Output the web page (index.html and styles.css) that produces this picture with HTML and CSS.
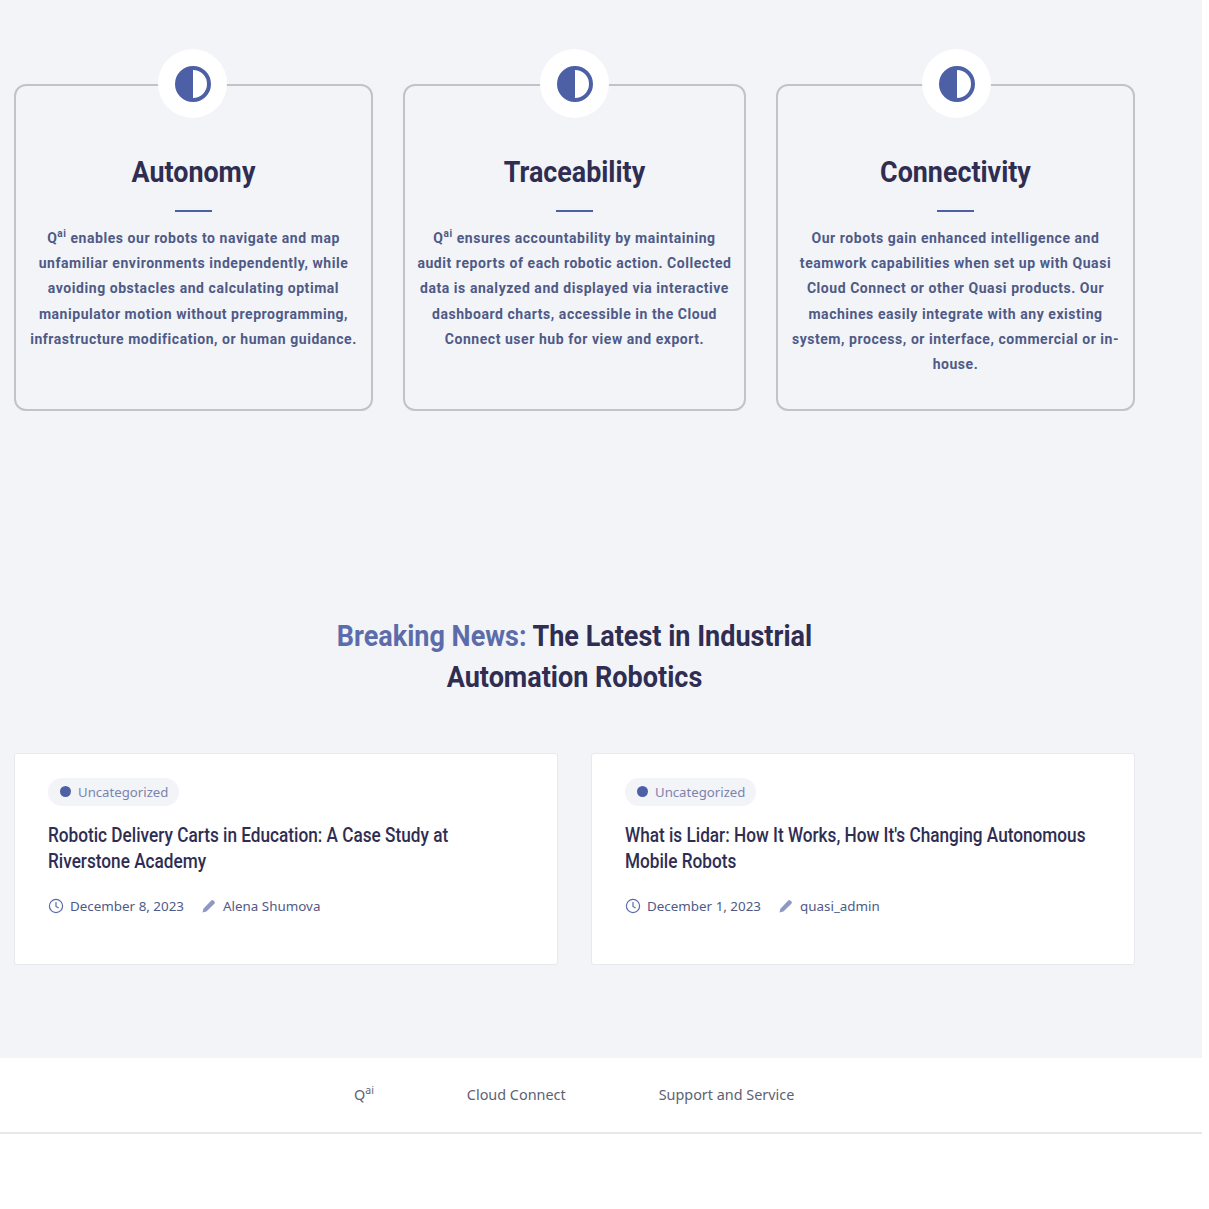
FILE: index.html
```html
<!DOCTYPE html>
<html lang="en">
<head>
<meta charset="utf-8">
<title>Quasi</title>
<link rel="stylesheet" href="styles.css">
</head>
<body>
<div class="page">
  <main class="main">
    <section class="features">
      <article class="feature">
        <span class="badge"><svg class="badge-icon" viewBox="0 0 36 36"><circle cx="18" cy="18" r="16" fill="#fff" stroke="#4d60a6" stroke-width="4"/><path d="M18 2a16 16 0 0 0 0 32z" fill="#4d60a6"/></svg></span>
        <h3 class="feature-title">Autonomy</h3>
        <div class="rule"></div>
        <p class="feature-text">Q<sup>ai</sup> enables our robots to navigate and map unfamiliar environments independently, while avoiding obstacles and calculating optimal manipulator motion without preprogramming, infrastructure modification, or human guidance.</p>
      </article>
      <article class="feature">
        <span class="badge"><svg class="badge-icon" viewBox="0 0 36 36"><circle cx="18" cy="18" r="16" fill="#fff" stroke="#4d60a6" stroke-width="4"/><path d="M18 2a16 16 0 0 0 0 32z" fill="#4d60a6"/></svg></span>
        <h3 class="feature-title">Traceability</h3>
        <div class="rule"></div>
        <p class="feature-text">Q<sup>ai</sup> ensures accountability by maintaining audit reports of each robotic action. Collected data is analyzed and displayed via interactive dashboard charts, accessible in the Cloud Connect user hub for view and export.</p>
      </article>
      <article class="feature">
        <span class="badge"><svg class="badge-icon" viewBox="0 0 36 36"><circle cx="18" cy="18" r="16" fill="#fff" stroke="#4d60a6" stroke-width="4"/><path d="M18 2a16 16 0 0 0 0 32z" fill="#4d60a6"/></svg></span>
        <h3 class="feature-title">Connectivity</h3>
        <div class="rule"></div>
        <p class="feature-text">Our robots gain enhanced intelligence and teamwork capabilities when set up with Quasi Cloud Connect or other Quasi products. Our machines easily integrate with any existing system, process, or interface, commercial or in-house.</p>
      </article>
    </section>

    <h2 class="news-heading"><span class="accent">Breaking News:</span> The Latest in Industrial<br>Automation Robotics</h2>

    <section class="news">
      <article class="post">
        <span class="tag"><span class="dot"></span>Uncategorized</span>
        <h4 class="post-title">Robotic Delivery Carts in Education: A Case Study at Riverstone Academy</h4>
        <div class="meta">
          <svg class="meta-icon" viewBox="0 0 16 16"><circle cx="8" cy="8" r="6.6" fill="none" stroke="#5c6cab" stroke-width="1.2"/><path d="M8 4v4.4l2.6 1.6" fill="none" stroke="#5c6cab" stroke-width="1.2"/></svg>
          <span class="meta-date">December 8, 2023</span>
          <svg class="meta-icon" viewBox="0 0 16 16"><path d="M1.5 14.5l.9-3.8 7.8-8.2a1.6 1.6 0 0 1 2.2 0l1 1a1.6 1.6 0 0 1 0 2.2l-8 7.9z" fill="#8f98c4"/></svg>
          <span>Alena Shumova</span>
        </div>
      </article>
      <article class="post">
        <span class="tag"><span class="dot"></span>Uncategorized</span>
        <h4 class="post-title">What is Lidar: How It Works, How It's Changing Autonomous Mobile Robots</h4>
        <div class="meta">
          <svg class="meta-icon" viewBox="0 0 16 16"><circle cx="8" cy="8" r="6.6" fill="none" stroke="#5c6cab" stroke-width="1.2"/><path d="M8 4v4.4l2.6 1.6" fill="none" stroke="#5c6cab" stroke-width="1.2"/></svg>
          <span class="meta-date">December 1, 2023</span>
          <svg class="meta-icon" viewBox="0 0 16 16"><path d="M1.5 14.5l.9-3.8 7.8-8.2a1.6 1.6 0 0 1 2.2 0l1 1a1.6 1.6 0 0 1 0 2.2l-8 7.9z" fill="#8f98c4"/></svg>
          <span>quasi_admin</span>
        </div>
      </article>
    </section>
  </main>
  <footer class="footer">
    <nav class="footer-nav">
      <a class="footer-link">Q<sup>ai</sup></a>
      <a class="footer-link">Cloud Connect</a>
      <a class="footer-link">Support and Service</a>
    </nav>
  </footer>
</div>
</body>
</html>
```
FILE: styles.css
```css
* { box-sizing: border-box; }
html, body { margin: 0; padding: 0; background: #fff; }
body { font-family: "Roboto", "Liberation Sans", sans-serif; color: #2f2d52; }
.page { width: 1202px; height: 1209px; overflow: hidden; }
.main { background: #f2f4f8; height: 1058px; padding: 84px 67px 0 14px; }

.features { display: grid; grid-template-columns: 359px 343px 359px; gap: 30px; }
.feature {
  position: relative;
  height: 327px;
  border: 2px solid #c2c3c6;
  border-radius: 12px;
  padding: 0 12px;
  text-align: center;
}
.badge {
  position: absolute;
  top: -37px;
  left: 50%;
  width: 69px;
  height: 69px;
  margin-left: -34.5px;
  border-radius: 50%;
  background: #fff;
  display: flex;
  align-items: center;
  justify-content: center;
}
.feature:first-child .badge { margin-left: -35.5px; }
.feature:last-child .badge { margin-left: -33.5px; }
.badge-icon { width: 36px; height: 36px; }
.feature-title {
  margin: 66px 0 0;
  font-size: 30px;
  line-height: 40px;
  font-weight: 700;
  color: #2f2d52;
  transform: scaleX(0.895);
}
.rule { width: 37px; height: 2px; background: #4d60a6; margin: 18px auto 0; }
.feature-text {
  margin: 14px 0 0;
  font-size: 14px;
  line-height: 25.2px;
  font-weight: 700;
  letter-spacing: 0.55px;
  color: #4f5a86;
}
.feature-text sup { font-size: 10px; line-height: 0; }

.news-heading {
  margin: 204px 0 0;
  text-align: center;
  font-size: 30px;
  line-height: 41px;
  font-weight: 700;
  color: #2f2d52;
  transform: scaleX(0.9);
}
.accent { color: #5c6cab; }

.news { display: grid; grid-template-columns: 544px 544px; gap: 33px; margin-top: 56px; }
.post {
  height: 212px;
  background: #fff;
  border: 1px solid #e8e9ee;
  border-radius: 3px;
  padding: 24px 33px 0;
}
.tag {
  display: inline-flex;
  align-items: center;
  height: 28px;
  padding: 0 11px 0 12px;
  border-radius: 14px;
  background: #f2f4f8;
  font-family: "Noto Sans", sans-serif;
  font-size: 13.2px;
  color: #7b83ad;
}
.dot { width: 11px; height: 11px; border-radius: 50%; background: #4d60a6; margin-right: 7px; margin-top: -2px; }
.post-title {
  width: 555px;
  margin: 16px 0 0;
  font-size: 20px;
  line-height: 26px;
  font-weight: 500;
  color: #2f2d52;
  transform: scaleX(0.86);
  transform-origin: left center;
}
.meta {
  display: flex;
  align-items: center;
  margin-top: 23px;
  font-family: "Noto Sans", sans-serif;
  font-size: 13.4px;
  color: #4f5a86;
}
.meta-icon { width: 16px; height: 16px; margin-right: 6px; }
.meta-date { margin-right: 17px; }

.footer { height: 76px; background: #fff; border-bottom: 2px solid #e8e8ea; }
.footer-nav { display: flex; padding: 27px 0 0 354px; gap: 93px; }
.footer-link { font-family: "Noto Sans", sans-serif; font-size: 14.4px; line-height: 20px; color: #5d6272; }
.footer-link sup { font-size: 10.5px; line-height: 0; }
```
